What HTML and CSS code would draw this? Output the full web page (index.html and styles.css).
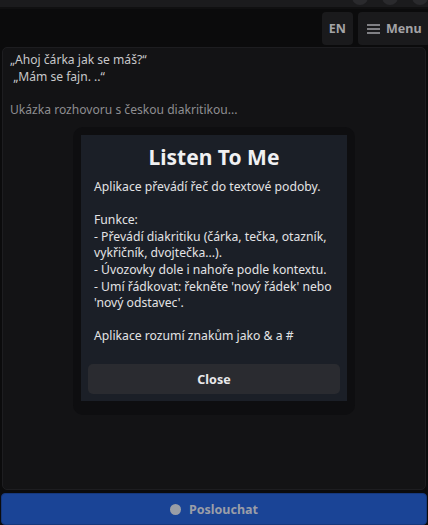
FILE: index.html
```html
<!DOCTYPE html>
<html lang="cs">
<head>
  <meta charset="UTF-8" />
  <meta name="viewport" content="width=device-width, initial-scale=1" />
  <title>Listen To Me</title>
  <link rel="stylesheet" href="styles.css">
</head>
<body>

<div class="topstrip">
  <span class="dot"></span><span class="dot"></span><span class="dot"></span>
</div>

<header class="toolbar">
  <button class="tool-btn">EN</button>
  <button class="tool-btn menu-btn">
    <svg width="13" height="10" viewBox="0 0 13 10"><path d="M0 1h13M0 5h13M0 9h13" stroke="currentColor" stroke-width="1.6"/></svg>
    Menu
  </button>
</header>

<main class="transcript">
  <p>„Ahoj čárka jak se máš?“<br>&nbsp;„Mám se fajn. ..“</p>
  <p class="hint">Ukázka rozhovoru s českou diakritikou...</p>
</main>

<button class="listen-btn"><span class="rec-dot"></span>Poslouchat</button>

<div class="modal-wrap">
  <div class="modal">
    <h2>Listen To Me</h2>
    <div class="modal-body">
      <p>Aplikace převádí řeč do textové podoby.</p>
      <p>Funkce:<br>
      - Převádí diakritiku (čárka, tečka, otazník, vykřičník, dvojtečka...).<br>
      - Úvozovky dole i nahoře podle kontextu.<br>
      - Umí řádkovat: řekněte 'nový řádek' nebo 'nový odstavec'.</p>
      <p>Aplikace rozumí znakům jako &amp; a #</p>
    </div>
    <div class="modal-foot">
      <button class="close-btn">Close</button>
    </div>
  </div>
</div>

</body>
</html>
```

FILE: styles.css
```css
html, body {
  height: 100%;
}

body {
  font-family: 'Noto Sans', 'Open Sans', sans-serif;
  background-color: #0b0b0c;
  color: #c9c9cb;
  margin: 0;
  padding: 0;
  display: flex;
  flex-direction: column;
  overflow: hidden;
}

.topstrip {
  height: 7px;
  background-color: #1b1b1d;
  border-bottom: 2px solid #101011;
  display: flex;
  justify-content: flex-end;
  gap: 14px;
  overflow: hidden;
}

.topstrip .dot {
  width: 16px;
  height: 16px;
  margin-top: -11px;
  border-radius: 50%;
  background-color: #2a2a2d;
}

.toolbar {
  display: flex;
  justify-content: flex-end;
  gap: 5px;
  padding: 3px 0 2px;
}

.tool-btn {
  font-family: inherit;
  font-size: 12.5px;
  font-weight: 700;
  color: #a3a3a6;
  background-color: #1a1a1c;
  border: none;
  border-radius: 4px;
  height: 33px;
  padding: 0 7px;
  display: flex;
  align-items: center;
  gap: 6px;
}

.menu-btn {
  padding: 0 8px 0 9px;
  width: 72px;
  margin-right: -2px;
}

.transcript {
  flex: 1;
  margin: 0 2px;
  padding: 4px 7px;
  background-color: #131315;
  border: 1px solid #1d1d20;
  border-radius: 5px;
  font-size: 12.1px;
  line-height: 16.5px;
  color: #c8c8ca;
}

.transcript p {
  margin: 0 0 16.5px;
}

.transcript .hint {
  color: #8e8e91;
}

.listen-btn {
  margin: 3px 1px 0;
  height: 32px;
  background-color: #1a4496;
  border: 1px solid #16387c;
  border-radius: 4px;
  color: #9a9ea8;
  font-family: inherit;
  font-size: 12.5px;
  font-weight: 700;
  display: flex;
  align-items: center;
  justify-content: center;
  gap: 8px;
}

.rec-dot {
  width: 11px;
  height: 11px;
  border-radius: 50%;
  background-color: #9a9ea6;
}

.modal-wrap {
  position: absolute;
  left: 73px;
  top: 127px;
  width: 266px;
  padding: 8px 8px 14px;
  background-color: #0e0e10;
  border-radius: 10px;
}

.modal {
  height: 266px;
  background-color: #1b1f27;
  color: #e3e3e5;
  display: flex;
  flex-direction: column;
}

.modal h2 {
  margin: 9px 0 0;
  text-align: center;
  font-size: 21px;
  font-weight: 700;
  line-height: 26px;
  color: #f0f0f2;
}

.modal-body {
  padding: 9px 13px 0;
  font-size: 12.2px;
  line-height: 16.6px;
}

.modal-body p {
  margin: 0 0 16.6px;
}

.modal-foot {
  margin-top: auto;
  padding: 0 7px 7px;
}

.close-btn {
  width: 100%;
  height: 30px;
  font-family: inherit;
  font-size: 12.5px;
  font-weight: 700;
  color: #e8e8ea;
  background-color: #2a2b30;
  border: none;
  border-radius: 5px;
}
```
